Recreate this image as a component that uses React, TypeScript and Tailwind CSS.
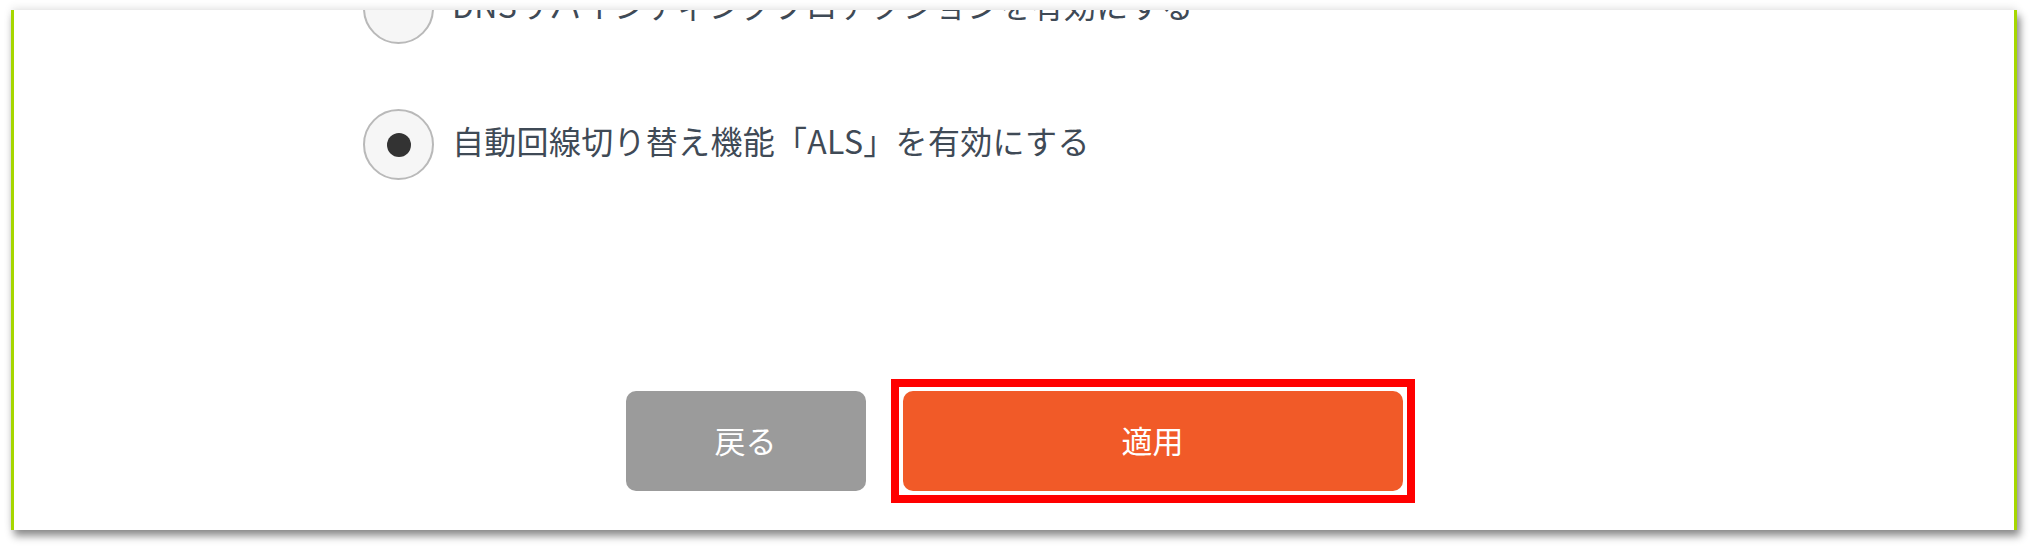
import React from 'react'

const FONT = "font-['Noto_Sans_CJK_JP','Noto_Sans',sans-serif]"

const options = [
  { label: 'DNSリバインディングプロテクションを有効にする', checked: false },
  { label: '自動回線切り替え機能「ALS」を有効にする', checked: true },
]

function Radio({ checked }: { checked: boolean }) {
  return (
    <div className="w-[71px] h-[71px] shrink-0 rounded-full border-2 border-[#b9b9b9] bg-[#f6f6f6] flex items-center justify-center">
      {checked ? <div className="w-[24px] h-[24px] rounded-full bg-[#333333]" /> : null}
    </div>
  )
}

export default function App() {
  return (
    <div className={`w-[2036px] h-[550px] bg-white pt-[10px] pl-[11px] overflow-hidden ${FONT}`}>
      <div className="w-[2006px] h-[520px] bg-white border-x-[3px] border-[#a6d700] overflow-hidden shadow-[0_-3px_8px_rgba(0,0,0,0.08),3px_6px_8px_rgba(0,0,0,0.45)]">
        <div className="flex flex-col gap-[65px] mt-[-37px] pl-[349px]">
          {options.map((opt) => (
            <label key={opt.label} className="flex items-center h-[71px]">
              <Radio checked={opt.checked} />
              <span className="ml-[18px] mb-[10px] text-[32px] leading-none tracking-[0.3px] text-[#3f4a56] whitespace-nowrap">
                {opt.label}
              </span>
            </label>
          ))}
        </div>
        <div className="flex justify-center gap-[37px] mt-[211px]">
          <button className="w-[240px] h-[100px] pb-[4px] rounded-[10px] bg-[#9b9b9b] text-white text-[31px] leading-none">
            戻る
          </button>
          <div className="relative">
            <button className="w-[500px] h-[100px] pb-[4px] rounded-[10px] bg-[#f15a28] text-white text-[31px] leading-none">
              適用
            </button>
            <span className="absolute -inset-[12px] border-[8px] border-[#ff0000] pointer-events-none" />
          </div>
        </div>
      </div>
    </div>
  )
}
